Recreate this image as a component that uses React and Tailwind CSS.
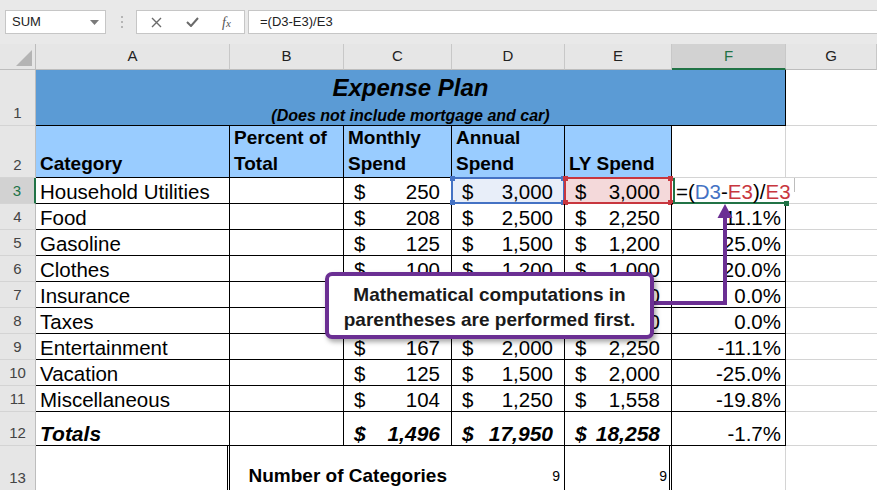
const ROWS = [
  ['Household Utilities', '250', '3,000', '3,000', null],
  ['Food', '208', '2,500', '2,250', '11.1%'],
  ['Gasoline', '125', '1,500', '1,200', '25.0%'],
  ['Clothes', '100', '1,200', '1,000', '20.0%'],
  ['Insurance', '83', '1,000', '1,000', '0.0%'],
  ['Taxes', '333', '4,000', '4,000', '0.0%'],
  ['Entertainment', '167', '2,000', '2,250', '-11.1%'],
  ['Vacation', '125', '1,500', '2,000', '-25.0%'],
  ['Miscellaneous', '104', '1,250', '1,558', '-19.8%'],
]

const LETTERS = ['A', 'B', 'C', 'D', 'E', 'F', 'G']

function RowHead({ n, active }) {
  return (
    <div
      className={
        'flex items-end justify-center border-b border-[#d4d4d4] pb-[1px] text-[15px] leading-[22px] ' +
        (active
          ? 'border-r-2 border-r-[#217346] bg-[#d2d2d2] text-[#217346]'
          : 'border-r border-r-[#bdbdbd] bg-[#e6e6e6] text-[#444]')
      }
    >
      {n}
    </div>
  )
}

function Money({ v, bold }) {
  return (
    <div
      className={
        'flex w-full justify-between pl-[10px] pr-[11px] ' + (bold ? 'text-[21px] font-bold italic' : '')
      }
    >
      <span>$</span>
      <span>{v}</span>
    </div>
  )
}

function Corners({ color }) {
  return (
    <>
      <span className={'absolute -left-[3px] -top-[3px] h-[5px] w-[5px] ' + color} />
      <span className={'absolute -right-[3px] -top-[3px] h-[5px] w-[5px] ' + color} />
      <span className={'absolute -bottom-[3px] -left-[3px] h-[5px] w-[5px] ' + color} />
      <span className={'absolute -bottom-[3px] -right-[3px] h-[5px] w-[5px] ' + color} />
    </>
  )
}

function Toolbar() {
  return (
    <div className="flex h-[44px] items-center bg-[#e9e9e9] pl-[5px]">
      <div className="flex h-[24px] w-[101px] items-center justify-between border border-[#c6c6c6] bg-white pl-[6px] pr-[6px] text-[13px] text-[#222]">
        <span>SUM</span>
        <svg width="9" height="5" viewBox="0 0 9 5">
          <path d="M0 0h9L4.5 5z" fill="#7a7a7a" />
        </svg>
      </div>
      <div className="ml-[15px] flex w-[2px] flex-col gap-[3px]">
        <span className="h-[2px] w-[2px] bg-[#b5b5b5]" />
        <span className="h-[2px] w-[2px] bg-[#b5b5b5]" />
        <span className="h-[2px] w-[2px] bg-[#b5b5b5]" />
      </div>
      <div className="ml-[13px] flex h-[24px] w-[109px] items-center border border-[#c6c6c6] bg-white">
        <svg className="ml-[14px]" width="11" height="11" viewBox="0 0 11 11">
          <path d="M1 1l9 9M10 1l-9 9" stroke="#6a6a6a" strokeWidth="1.4" />
        </svg>
        <svg className="ml-[24px]" width="13" height="10" viewBox="0 0 13 10">
          <path d="M1 5l4 4 7-8" stroke="#6a6a6a" strokeWidth="2" fill="none" />
        </svg>
        <span className="ml-[23px] font-['Liberation_Serif',serif] text-[14px] italic text-[#555]">
          f<span className="text-[11px]">x</span>
        </span>
      </div>
      <div className="ml-[3px] flex h-[24px] flex-1 items-center border border-r-0 border-[#c6c6c6] bg-white pl-[11px] text-[13px] text-[#222]">
        =(D3-E3)/E3
      </div>
    </div>
  )
}

export default function App() {
  return (
    <div className="relative h-[490px] w-[877px] overflow-hidden bg-white font-['Liberation_Sans',Arial,sans-serif] text-black">
      <Toolbar />
      <div className="grid grid-cols-[36px_194px_114px_108px_113px_107px_114px_91px] grid-rows-[26px_56px_52px_26px_26px_26px_26px_26px_26px_26px_26px_26px_34px_45px]">
        {/* column headers */}
        <div className="relative border-b border-r border-[#bdbdbd] bg-[#e6e6e6]">
          <svg className="absolute bottom-[3px] right-[3px]" width="16" height="16" viewBox="0 0 16 16">
            <path d="M16 0v16H0z" fill="#b4b4b4" />
          </svg>
        </div>
        {LETTERS.map((l) => (
          <div
            key={l}
            className={
              'flex items-center justify-center border-r border-[#c8c8c8] text-[15px] ' +
              (l === 'F'
                ? 'border-b-2 border-b-[#217346] bg-[#d2d2d2] text-[#217346]'
                : 'border-b border-b-[#bdbdbd] bg-[#e6e6e6] text-[#222]')
            }
          >
            {l}
          </div>
        ))}

        {/* row 1 */}
        <RowHead n="1" />
        <div className="col-span-6 flex flex-col items-center justify-end border-b border-r border-black bg-[#5b9bd5] font-bold italic">
          <div className="mb-[5px] text-[24px] leading-[28px]">Expense Plan</div>
          <div className="text-[16px] leading-[18px]">(Does not include mortgage and car)</div>
        </div>
        <div className="border-b border-[#d4d4d4]" />

        {/* row 2 */}
        <RowHead n="2" />
        {['Category', 'Percent of\nTotal', 'Monthly\nSpend', 'Annual\nSpend', 'LY Spend'].map((h) => (
          <div
            key={h}
            className="flex items-end whitespace-pre-line border-b border-r border-black bg-[#99ccff] pl-[4px] text-[19px] font-bold leading-[26px]"
          >
            {h}
          </div>
        ))}
        <div className="border-b border-r border-[#d4d4d4]" />
        <div className="border-b border-[#d4d4d4]" />

        {/* data rows */}
        {ROWS.map((r, i) => {
          const first = i === 0
          return [
            <RowHead key={'h' + i} n={String(i + 3)} active={first} />,
            <div key={'a' + i} className="flex items-end border-b border-r border-black pl-[4px] text-[20.5px] leading-[22px]">
              {r[0]}
            </div>,
            <div key={'b' + i} className="border-b border-r border-black" />,
            <div key={'c' + i} className="flex items-end border-b border-r border-black text-[20.5px] leading-[22px]">
              <Money v={r[1]} />
            </div>,
            <div
              key={'d' + i}
              className={
                'relative flex items-end border-b border-r border-black text-[20.5px] leading-[22px] ' +
                (first ? 'bg-[#e8eef9]' : '')
              }
            >
              <Money v={r[2]} />
              {first && (
                <div className="absolute -inset-[1px] border-2 border-[#4472c4]">
                  <Corners color="bg-[#4472c4]" />
                </div>
              )}
            </div>,
            <div
              key={'e' + i}
              className={
                'relative flex items-end border-b border-r border-black text-[20.5px] leading-[22px] ' +
                (first ? 'bg-[#f4d9da]' : '')
              }
            >
              <Money v={r[3]} />
              {first && (
                <div className="absolute -inset-[1px] border-2 border-[#c8363e]">
                  <Corners color="bg-[#c8363e]" />
                </div>
              )}
            </div>,
            first ? (
              <div key={'f' + i} className="relative z-10 flex items-end border-b border-r border-black text-[20.5px] leading-[22px]">
                <div className="absolute -bottom-[1px] left-[1px] right-[-1px] top-0 border-b-2 border-l-2 border-[#217346] bg-white" />
                <span className="absolute -bottom-[3px] -right-[4px] h-[5px] w-[5px] bg-[#217346]" />
                <span className="relative whitespace-nowrap pl-[4px]">
                  =(<span className="text-[#4472c4]">D3</span>-<span className="text-[#c8363e]">E3</span>)/
                  <span className="text-[#c8363e]">E3</span>
                </span>
                <span className="absolute left-[122px] top-0 h-[14px] w-px bg-[#bdbdbd]" />
              </div>
            ) : (
              <div key={'f' + i} className="flex items-end justify-end border-b border-r border-black pr-[4px] text-[20.5px] leading-[22px]">
                {r[4]}
              </div>
            ),
            <div key={'g' + i} className="border-b border-[#d4d4d4]" />,
          ]
        })}

        {/* row 12 totals */}
        <RowHead n="12" />
        <div className="flex items-end border-b border-r border-black pl-[4px] text-[21px] font-bold italic leading-[22px]">
          Totals
        </div>
        <div className="border-b border-r border-black" />
        {['1,496', '17,950', '18,258'].map((v) => (
          <div key={v} className="flex items-end border-b border-r border-black leading-[22px]">
            <Money v={v} bold />
          </div>
        ))}
        <div className="flex items-end justify-end border-b border-r border-black pr-[4px] text-[20.5px] leading-[22px]">
          -1.7%
        </div>
        <div className="border-b border-[#d4d4d4]" />

        {/* row 13 */}
        <RowHead n="13" />
        <div className="border-b border-b-[#d4d4d4] border-r-[3px] border-double border-r-black" />
        <div className="col-span-2 flex items-end justify-end border-b border-black pb-[3px] pr-[5px] text-[19px] font-bold leading-[22px]">
          Number of Categories
        </div>
        <div className="flex items-end justify-end border-b border-r border-black pb-[3px] pr-[4px] text-[14px] leading-[22px]">
          9
        </div>
        <div className="flex items-end justify-end border-b border-r-[3px] border-double border-black pb-[3px] pr-[2px] text-[14px] leading-[22px]">
          9
        </div>
        <div className="border-b border-r border-[#d4d4d4]" />
        <div className="border-b border-[#d4d4d4]" />
      </div>

      {/* callout arrow */}
      <svg className="pointer-events-none absolute left-0 top-0 z-20" width="877" height="490" viewBox="0 0 877 490">
        <path d="M650 303H725V215" stroke="#6b2f93" strokeWidth="4" fill="none" />
        <path d="M725 204L717.5 218H732.5Z" fill="#6b2f93" />
      </svg>
      <div className="absolute left-[325px] top-[272px] z-30 flex h-[67px] w-[329px] flex-col items-center justify-center rounded-[7px] border-4 border-[#6b2f93] bg-white pt-[3px] text-center text-[19px] font-bold leading-[25px] text-[#1a1a1a] shadow-[2px_3px_5px_rgba(0,0,0,0.35)]">
        <div>Mathematical computations in</div>
        <div>parentheses are performed first.</div>
      </div>
    </div>
  )
}
